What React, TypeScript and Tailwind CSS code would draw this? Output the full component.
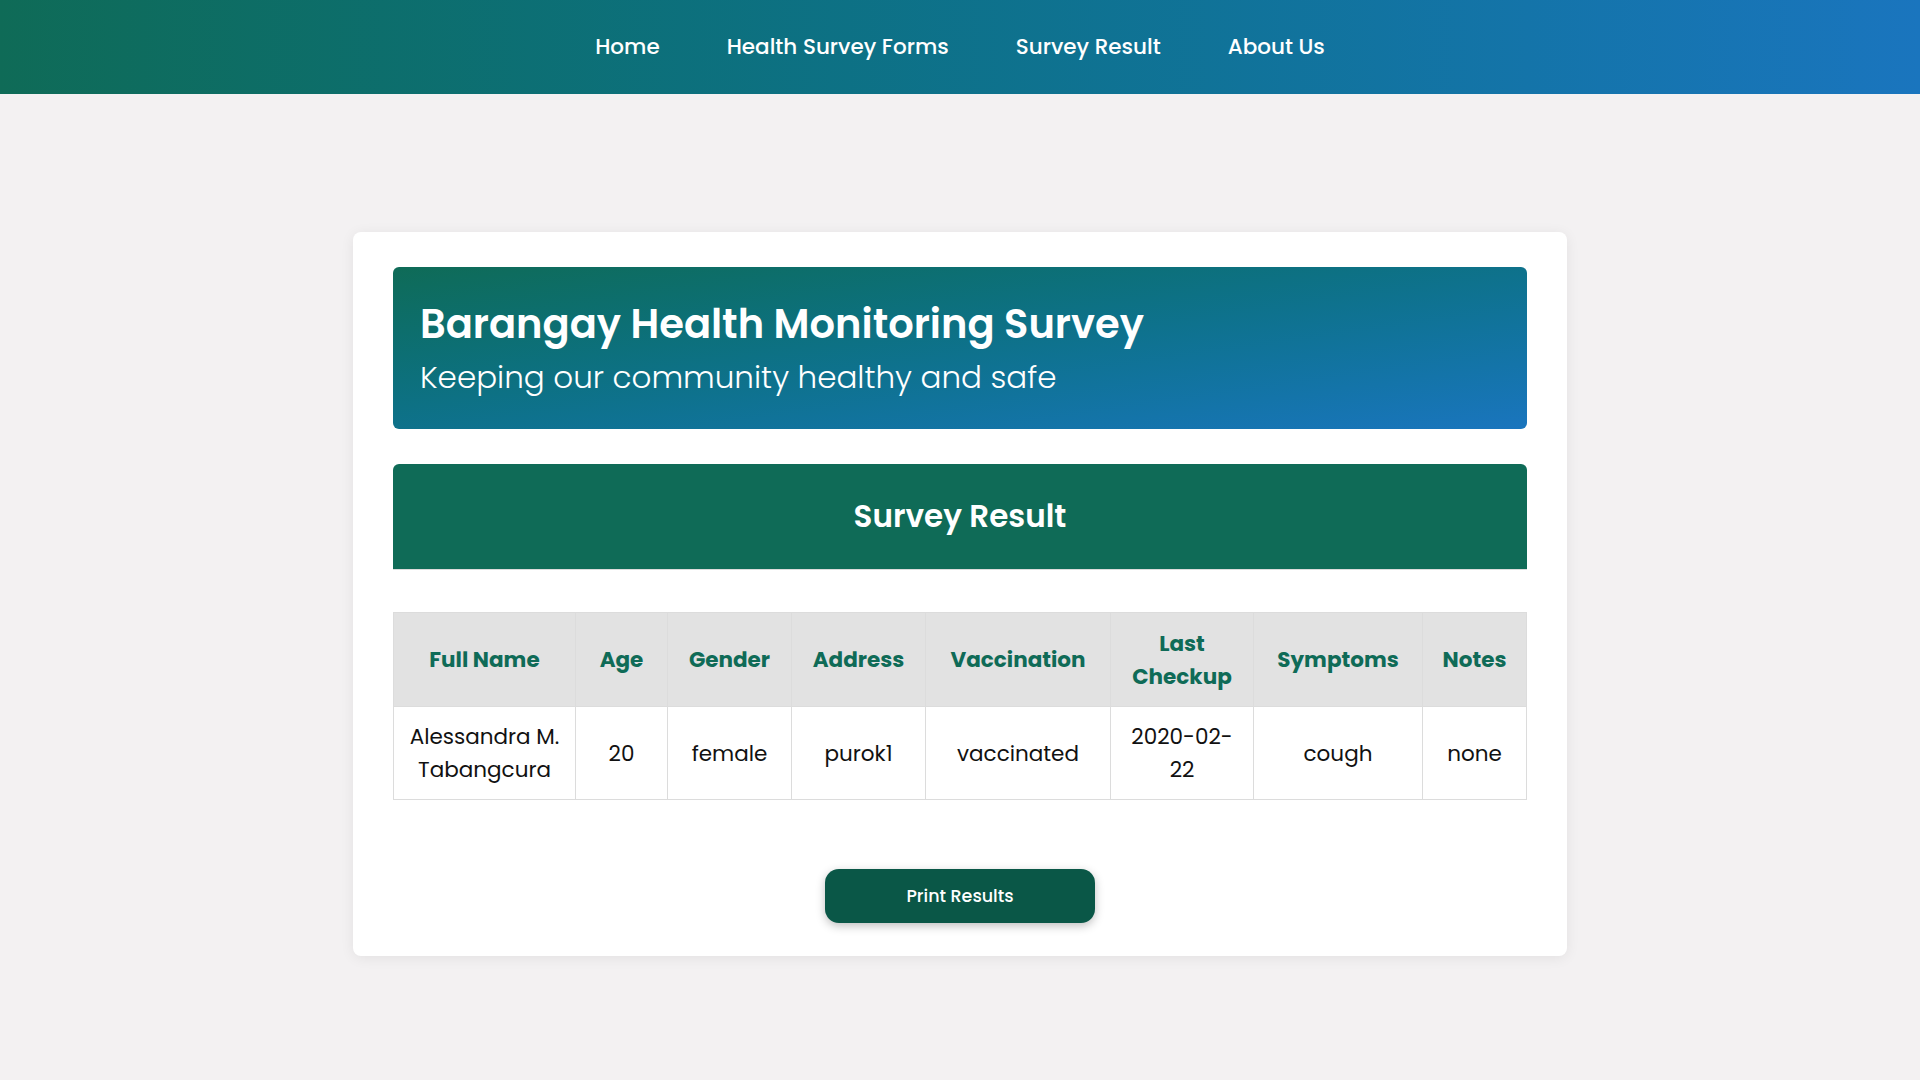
const navLinks = ['Home', 'Health Survey Forms', 'Survey Result', 'About Us'];

const columns = [
    { label: 'Full Name', width: 'w-[182px]' },
    { label: 'Age', width: 'w-[92px]' },
    { label: 'Gender', width: 'w-[124px]' },
    { label: 'Address', width: 'w-[134px]' },
    { label: 'Vaccination', width: 'w-[185px]' },
    { label: 'Last Checkup', width: 'w-[143px]' },
    { label: 'Symptoms', width: 'w-[169px]' },
    { label: 'Notes', width: 'w-[104px]' },
];

const rows = [
    ['Alessandra M. Tabangcura', '20', 'female', 'purok1', 'vaccinated', '2020-02-22', 'cough', 'none'],
];

const App = () => {
    return (
        <div className="min-h-screen bg-[#f3f1f2] font-['Poppins','Open_Sans',sans-serif] pb-[125px]">
            {/* 네비게이션 */}
            <nav className="h-[94px] bg-gradient-to-r from-[#0f6b57] to-[#1a75be] flex items-center justify-center gap-[67px]">
                {navLinks.map((link) => (
                    <a key={link} href="#" className="text-white text-[21.5px] font-medium">
                        {link}
                    </a>
                ))}
            </nav>

            {/* 카드 */}
            <main className="w-[1214px] mx-auto mt-[138px] bg-white rounded-lg shadow-[0_2px_14px_rgba(0,0,0,0.07)] px-[40px] pt-[35px] pb-[33px]">
                <header className="h-[162px] rounded-md bg-gradient-to-br from-[#0f6b57] to-[#1a75be] px-[27px] flex flex-col justify-center text-white">
                    <h1 className="text-[40px] font-semibold leading-[52px]">
                        Barangay Health Monitoring Survey
                    </h1>
                    <p className="mt-[6px] text-[31px] font-light leading-[42px]">
                        Keeping our community healthy and safe
                    </p>
                </header>

                <h2 className="mt-[35px] h-[106px] rounded-t-md bg-[#0f6b57] border-b border-[#dcdcdc] flex items-center justify-center text-white text-[31px] font-semibold">
                    Survey Result
                </h2>

                <table className="mt-[42px] w-full table-fixed border-collapse text-center">
                    <thead>
                        <tr className="bg-[#e2e2e2] h-[94px]">
                            {columns.map((col) => (
                                <th
                                    key={col.label}
                                    className={`${col.width} border border-[#dcdcdc] px-[15px] text-[21.5px] font-bold leading-[33px] text-[#0f6b57]`}
                                >
                                    {col.label}
                                </th>
                            ))}
                        </tr>
                    </thead>
                    <tbody>
                        {rows.map((row, i) => (
                            <tr key={i} className="h-[93px]">
                                {row.map((cell, j) => (
                                    <td
                                        key={j}
                                        className="border border-[#dcdcdc] px-[12px] text-[21.5px] leading-[33px] text-[#111]"
                                    >
                                        {cell}
                                    </td>
                                ))}
                            </tr>
                        ))}
                    </tbody>
                </table>

                <div className="mt-[69px] flex justify-center">
                    <button className="w-[270px] h-[54px] rounded-[14px] bg-[#0a5747] text-white text-[17.5px] font-medium shadow-[0_3px_10px_rgba(0,0,0,0.25)]">
                        Print Results
                    </button>
                </div>
            </main>
        </div>
    );
};

export default App;
